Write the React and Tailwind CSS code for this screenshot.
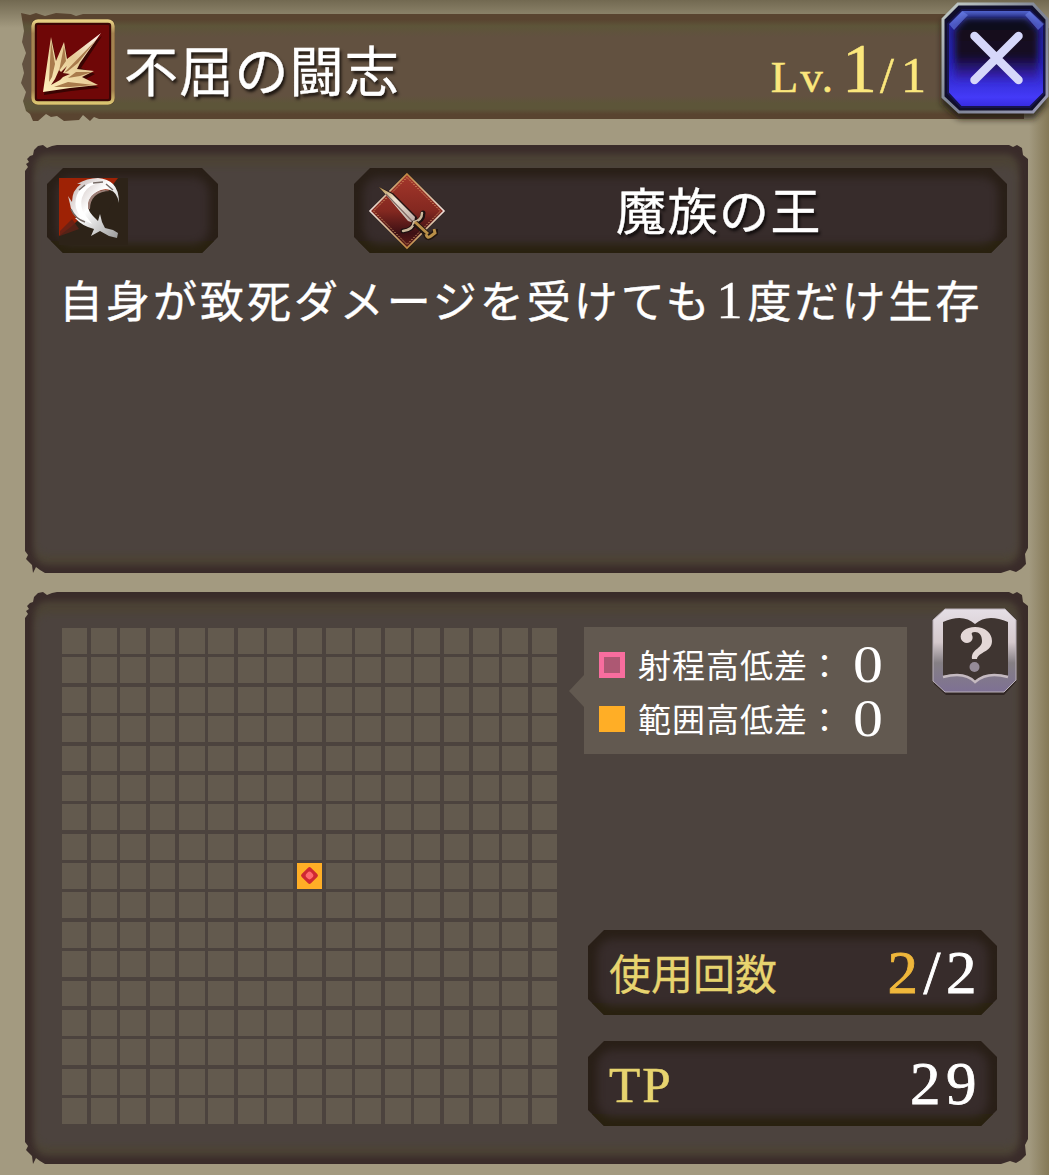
import { clsx } from "clsx";

const GRID_SIZE = 17;
const CENTER = 8 * GRID_SIZE + 8;

const Plate = ({ className, children }) => (
  <div
    className={clsx(
      "relative bg-[#291f17] [clip-path:polygon(16px_0,calc(100%_-_16px)_0,100%_16px,100%_calc(100%_-_16px),calc(100%_-_16px)_100%,16px_100%,0_calc(100%_-_16px),0_16px)]",
      className
    )}
  >
    <div className="absolute inset-x-0 bottom-0 h-3 bg-[#29210f]" />
    <div className="absolute inset-x-[9px] top-[9px] bottom-[9px] rounded-[16px] bg-[#372c2b] blur-[4px]" />
    <div className="relative flex h-full items-center">{children}</div>
  </div>
);

// Dark panel with torn corners
const Panel = ({ className, children }) => (
  <section
    className={clsx(
      "relative ml-[25px] w-[1003px] [clip-path:polygon(0_26px,3px_22px,1px_19px,4px_17px,2px_14px,5px_11px,8px_10px,9px_5px,13px_1px,18px_0,22px_3px,27px_1px,32px_0,calc(100%_-_19px)_0,calc(100%_-_15px)_2px,calc(100%_-_11px)_0,calc(100%_-_6px)_3px,calc(100%_-_5px)_10px,100%_14px,100%_calc(100%_-_25px),calc(100%_-_3px)_calc(100%_-_19px),calc(100%_-_2px)_calc(100%_-_9px),calc(100%_-_7px)_calc(100%_-_4px),calc(100%_-_12px)_calc(100%_-_1px),calc(100%_-_18px)_calc(100%_-_3px),calc(100%_-_27px)_100%,20px_100%,15px_calc(100%_-_3px),11px_calc(100%_-_6px),8px_100%,7px_calc(100%_-_8px),1px_calc(100%_-_14px),3px_calc(100%_-_18px),0_calc(100%_-_22px))]",
      className
    )}
  >
    <div className="absolute inset-0 bg-[#3a2c2a]" />
    <div className="absolute inset-x-[9px] top-[9px] bottom-[8px] rounded-[14px] bg-[#4c4336] blur-[3px]" />
    <div className="absolute inset-x-[11px] top-[22px] bottom-[18px] rounded-[10px] bg-[#4c433e] blur-[3px]" />
    <div className="relative">{children}</div>
  </section>
);

const BurstIcon = () => (
  <svg className="size-[86px] shrink-0" viewBox="0 0 86 86">
    <defs>
      <linearGradient id="burstFrame" x2="0" y2="1">
        <stop stopColor="#e8d084" />
        <stop offset=".15" stopColor="#a58350" />
        <stop offset=".85" stopColor="#a58350" />
        <stop offset="1" stopColor="#dbc571" />
      </linearGradient>
      <linearGradient id="burstRay" x1="1" x2="0" y2="1">
        <stop stopColor="#fff4f0" />
        <stop offset=".45" stopColor="#e6cb96" />
        <stop offset="1" stopColor="#fff0bc" />
      </linearGradient>
    </defs>
    <rect x="1" y="0" width="84" height="86" rx="7" fill="#3d291a" />
    <rect x="3" y="2" width="80" height="82" rx="5" fill="none" stroke="url(#burstFrame)" strokeWidth="3.5" />
    <rect x="6" y="5" width="74" height="76" rx="2" fill="#6f0707" stroke="#3d0505" strokeWidth="2" />
    <path
      d="M13 73 21 18 26 42 34 23 37 40 71 14 50 46 64 52 53 58 68 66 40 69Z"
      fill="#390402"
      transform="translate(1 3)"
    />
    <path d="M13 73 21 18 26 42 34 23 37 40 71 14 50 44 47 50 64 52 52 58 68 66 40 69Z" fill="url(#burstRay)" />
    {/* shaded side of every ray */}
    <path d="M21 22 25 45 22 58 19 63Z M34 27 36 42 29 52Z M67 20 48 44 38 52 34 54Z M62 53 50 57 38 59 46 53Z M64 66 40 68 24 68 38 63Z" fill="#a97b4c" />
    <path d="M25 60 29 51 31 53 37 47 33 54 40 55 33 58 30 61 21 66Z" fill="#5f0b08" />
  </svg>
);

const SlashIcon = () => (
  <svg className="size-[69px] shrink-0" viewBox="0 0 69 69">
    <defs>
      <linearGradient id="slashBlade" x2="1" y2="1">
        <stop stopColor="#b9a9a6" />
        <stop offset=".45" stopColor="#fff" />
        <stop offset="1" stopColor="#999" />
      </linearGradient>
    </defs>
    <path fill="#2d2318" d="M0 0h69v67H0z" />
    <path fill="#9e2205" d="M0 0h59L49 13 13 48 0 58z" />
    <path fill="#602217" d="m13 41 7 10-19 7v-5z" opacity=".8" />
    <path d="M31 21Q36 12 48 12L56 20 49 34 41 42 29 33Z" fill="#2d2318" />
    <path
      d="M60 25Q58 14 51 12 44 10 38 14 30 19 29 27 29 33 34 38L39 43 41 36 43 44 46 50 54 52 59 55 58 60 50 58 41 53 32 58 35 51Q23 48 16 40L18 40Q12 34 11 26L9 18 13 24Q13 12 22 6L18 6Q28 0 39 0 49 1 54 6 60 12 60 25Z"
      fill="url(#slashBlade)"
    />
    <path d="M20 13Q29 2 44 4 30 6 25 15 20 24 24 34L33 46Q20 41 17 30 15 21 20 13Z" fill="#fff" />
    <path d="M29 31Q28 20 36 15 43 10 51 13 42 13 36 18 31 23 31 31Z" fill="#9c8078" />
    <path d="m20 12 6-5m8-2 10-1M12 31c3 7 8 11 14 13M47 6l7 6" fill="none" stroke="#756a65" strokeWidth="1.5" />
  </svg>
);

const SwordIcon = () => (
  <svg className="h-[78px] w-[78px] shrink-0" viewBox="0 0 78 78">
    <defs>
      <linearGradient id="gem" x2="0" y2="1">
        <stop stopColor="#a5372b" />
        <stop offset=".5" stopColor="#832820" />
        <stop offset=".8" stopColor="#3d1014" />
        <stop offset="1" stopColor="#621e18" />
      </linearGradient>
      <linearGradient id="gemEdge" x2="0" y2="1">
        <stop stopColor="#c08942" />
        <stop offset=".5" stopColor="#efe2dd" />
        <stop offset="1" stopColor="#c08942" />
      </linearGradient>
      <linearGradient id="sword" x2="1" y2="1">
        <stop stopColor="#b69347" />
        <stop offset=".4" stopColor="#efe3d3" />
        <stop offset="1" stopColor="#bcaaa4" />
      </linearGradient>
    </defs>
    <path d="M39 2 76 39 39 76 2 39Z" fill="url(#gem)" stroke="url(#gemEdge)" strokeWidth="1.6" />
    <path d="M39 5.5 72.5 39 39 72.5 5.5 39Z" fill="none" stroke="#dfa56b" strokeWidth="1" strokeDasharray="1.5 1.5" />
    <path d="m11 15 14 6 24 24 1 7-7-3-22-23Z" fill="#261313" />
    <path d="m11 15 13 7 23 23-1 6-6-2-20-24Z" fill="url(#sword)" />
    <path d="m18 22 26 27" stroke="#806a65" strokeWidth="1.2" />
    <path d="M55 41q0 8-9 10-1 7-11 8" fill="none" stroke="#1c1010" strokeWidth="5" strokeLinecap="round" />
    <path d="M54 41q0 7-8 9-1 8-11 9" fill="none" stroke="#c9b69a" strokeWidth="2.5" strokeLinecap="round" />
    <path d="m47 51 13 12m-2-1q1 5 5 2l4-3 0-4" fill="none" stroke="#211611" strokeWidth="6" />
    <path d="m47 50 13 12m-2 0q1 5 5 2l4-3-1-4" fill="none" stroke="#b98f48" strokeWidth="3" />
  </svg>
);

const CloseButton = () => (
  <button className="block h-[118px] w-[109px]" aria-label="close">
    <svg className="h-[118px] w-[109px] overflow-visible" viewBox="0 0 109 118">
      <defs>
        <linearGradient id="closeRim" x2="1" y2="1">
          <stop stopColor="#c5cec9" />
          <stop offset=".5" stopColor="#7c8293" />
          <stop offset="1" stopColor="#9b9bb6" />
        </linearGradient>
        <linearGradient id="closeFill" x2="0" y2="1">
          <stop stopColor="#5368ce" />
          <stop offset=".15" stopColor="#24249c" />
          <stop offset=".55" stopColor="#2723b8" />
          <stop offset=".9" stopColor="#443af8" />
          <stop offset="1" stopColor="#362ae0" />
        </linearGradient>
        <linearGradient id="closeCore" x2="0" y2="1">
          <stop stopColor="#11081c" />
          <stop offset=".6" stopColor="#130822" />
          <stop offset="1" stopColor="#3a26c8" />
        </linearGradient>
        <filter id="soft" x="-30%" y="-30%" width="160%" height="160%">
          <feGaussianBlur stdDeviation="3" />
        </filter>
      </defs>
      <path d="M19 12h74l14 16v76l-13 15H19L2 104V22Z" fill="#1d1911" opacity=".8" filter="url(#soft)" />
      <path d="M18 4h75l14 15v77l-14 16H19L3 97V19Z" fill="#100e2b" stroke="url(#closeRim)" strokeWidth="3" />
      <path d="M22 10h68l14 14v69l-14 14H21L8 93V24Z" fill="url(#closeFill)" stroke="#16144f" strokeWidth="2" />
      <path d="M26 18h60l12 12v50H15V30Z" fill="url(#closeCore)" filter="url(#soft)" />
      <path d="m9 24 13-13 6 4-14 15Zm95 0L90 11l-5 4 13 15Z" fill="#7187ef" opacity=".55" />
      <path d="m34.500 36 44 44m0-44-44 44" stroke="#d6d7fa" strokeWidth="8.500" strokeLinecap="round" />
    </svg>
  </button>
);

const HelpIcon = () => (
  <svg className="h-[90px] w-[86px]" viewBox="0 0 86 90">
    <defs>
      <linearGradient id="helpRim" x2="0" y2="1">
        <stop stopColor="#e5dfe6" />
        <stop offset=".4" stopColor="#d5c9cc" />
        <stop offset=".65" stopColor="#857f84" />
        <stop offset="1" stopColor="#7e7194" />
      </linearGradient>
    </defs>
    <path d="M13 4h60l11 12v58L72 87H14L2 76V15Z" fill="#2b211f" opacity=".8" />
    <path d="M13 1h60l11 11v60L72 84H13L1 73V12Z" fill="url(#helpRim)" stroke="#b9b0b8" />
    <path d="M11 14q20-9 32 2 12-11 33-2v54q-21-5-33 7-11-12-32-7Z" fill="#3f3531" />
    <path d="M11 69q22-6 32 5 12-11 33-5" fill="none" stroke="#c5bac1" strokeWidth="2.5" />
    <path
      d="M29 31C27 24 34 19 43 19c10 0 17 6 17 14 0 11-14 11-15 18h-5c-1-10 10-10 10-18 0-6-3-9-7-9-3 0-4 1-3 3 2 4-1 8-5 8-3 0-5-2-6-4Z"
      fill="#e3d7d6"
    />
    <circle cx="42.5" cy="59" r="5" fill="#958b97" />
  </svg>
);

const RangeGrid = () => (
  <div className="grid h-[496px] w-[496px] grid-cols-17 grid-rows-17 gap-[3.6px]">
    {Array.from({ length: GRID_SIZE * GRID_SIZE }, (_, i) =>
      i === CENTER ? (
        <div key={i} className="flex items-center justify-center bg-[#ffae26]">
          <div className="flex size-[13px] rotate-45 items-center justify-center rounded-[2px] bg-[#cf2832]">
            <div className="size-[7px] rounded-[3px] bg-[#ff686d]" />
          </div>
        </div>
      ) : (
        <div key={i} className="bg-[#635a4e]" />
      )
    )}
  </div>
);

const LegendRow = ({ swatch, label, value }) => (
  <div className="flex h-[54px] items-center">
    <div className={clsx("size-[26px] shrink-0", swatch)} />
    <span className="ml-[13px] w-[205px] shrink-0 pt-[3px] text-[33px] leading-[54px] tracking-[1px] whitespace-nowrap">
      {label}：
    </span>
    <span className="ml-[10px] origin-left scale-x-115 text-[52px] leading-[54px]">{value}</span>
  </div>
);

const App = () => {
  return (
    <div className="relative h-[1175px] w-[1049px] overflow-hidden bg-[#a39a80] font-['Liberation_Serif','Noto_Sans_CJK_JP',serif] text-white">
      <div className="absolute inset-y-0 right-0 w-5 bg-linear-to-r from-[#a39a80] to-[#857957]" />
      <div className="absolute inset-x-0 top-0 h-7 bg-linear-to-b from-[#726951] to-[#a39a80]" />

      {/* Header */}
      <header className="relative flex h-[145px] items-start pt-[13px] pl-[21px]">
        <div className="flex h-[109px] w-[1003px] items-start bg-[linear-gradient(#594430_6%,#5d5539_12%,#625140_22%,#625140_76%,#5d5539_83%,#5d5539_88%,#594430_93%)] pl-[9px] [clip-path:polygon(0_0,9px_2px,15px_0,24px_3px,35px_0,50px_1px,55px_3px,62px_1px,100%_1px,100%_106px,78px_106px,73px_104px,69px_108px,62px_102px,58px_107px,43px_108px,36px_103px,30px_104px,25px_101px,17px_108px,12px_108px,9px_101px,5px_98px,2px_88px,5px_79px,0_70px,3px_60px,1px_51px,5px_40px,1px_29px,3px_18px)]">
          <div className="pt-[6px]">
            <BurstIcon />
          </div>
          <h1 className="ml-[8px] pt-[21px] text-[54px] leading-[80px] tracking-[1.2px] whitespace-nowrap [-webkit-text-stroke:0.4px_white] [text-shadow:2px_3px_3px_#1c1510]">
            不屈の闘志
          </h1>
          <div className="ml-auto flex items-baseline pt-[11px] pr-[91px] text-[#fbe77c] [-webkit-text-stroke:0.5px_#fbe77c]">
            <span className="text-[45px] leading-[90px] tracking-[2px]">Lv.</span>
            <span className="ml-[7px] text-[70px] leading-[90px]">1</span>
            <span className="ml-[3px] text-[50px] leading-[90px] tracking-[7px]">/1</span>
          </div>
        </div>
        <div className="absolute top-0 right-0">
          <CloseButton />
        </div>
      </header>

      {/* Description */}
      <Panel className="h-[428px]">
        <div className="flex pt-[23px] pl-[22px]">
          <Plate className="h-[85px] w-[171px]">
            <div className="ml-[12px] pt-[3px]">
              <SlashIcon />
            </div>
          </Plate>
          <Plate className="ml-[136px] h-[85px] w-[653px]">
            <div className="ml-[14px]">
              <SwordIcon />
            </div>
            <span className="ml-[170px] pt-[5px] text-[50px] leading-[80px] tracking-[1.5px] whitespace-nowrap [-webkit-text-stroke:0.4px_white] [text-shadow:2px_3px_3px_#100c0c]">
              魔族の王
            </span>
          </Plate>
        </div>
        <p className="mt-[19px] ml-[34px] text-[44px] leading-[64px] tracking-[3px] whitespace-nowrap [-webkit-text-stroke:0.4px_white]">
          自身が致死ダメージを受けても
          <span className="mr-[2px] ml-[4px] text-[52px] leading-none">1</span>
          度だけ生存
        </p>
      </Panel>

      {/* Range and usage */}
      <Panel className="mt-[19px] h-[572px]">
        <div className="flex pt-[36px] pl-[36.5px]">
          <RangeGrid />
          <div className="ml-[26.5px] flex h-[498px] w-[440px] flex-col">
            <div className="-mt-[20px] flex items-start justify-between">
              <div className="relative mt-[19px] h-[127px] w-[323px] bg-[#625950] pt-[11px] pl-[15px]">
                <div className="absolute top-[48px] -left-[15px] h-[32px] w-[15px] bg-[#625950] [clip-path:polygon(100%_0,100%_100%,0_50%)]" />
                <LegendRow swatch="border-[5px] border-[#f86d9e] bg-[#ad5873]" label="射程高低差" value="0" />
                <LegendRow swatch="bg-[#ffae26]" label="範囲高低差" value="0" />
              </div>
              <div className="mr-[6px]">
                <HelpIcon />
              </div>
            </div>
            <div className="mt-auto ml-[4px] flex flex-col gap-[26px]">
              <Plate className="h-[85px] w-[409px]">
                <span className="ml-[21px] pt-[8px] text-[42px] whitespace-nowrap text-[#e7d46f] [-webkit-text-stroke:0.3px_#e7d46f]">
                  使用回数
                </span>
                <span className="mr-[15px] ml-auto text-[61px] tracking-[5.5px] [-webkit-text-stroke:0.8px_currentColor]">
                  <span className="text-[#efb73b] [-webkit-text-stroke:0.8px_#efb73b]">2</span>/2
                </span>
              </Plate>
              <Plate className="h-[85px] w-[409px]">
                <span className="ml-[21px] pt-[4px] text-[51px] tracking-[2px] text-[#e7d46f] [-webkit-text-stroke:0.6px_currentColor]">
                  TP
                </span>
                <span className="mr-[15px] ml-auto text-[61px] tracking-[5.5px] [-webkit-text-stroke:0.8px_currentColor]">
                  29
                </span>
              </Plate>
            </div>
          </div>
        </div>
      </Panel>
    </div>
  );
};

export default App;
